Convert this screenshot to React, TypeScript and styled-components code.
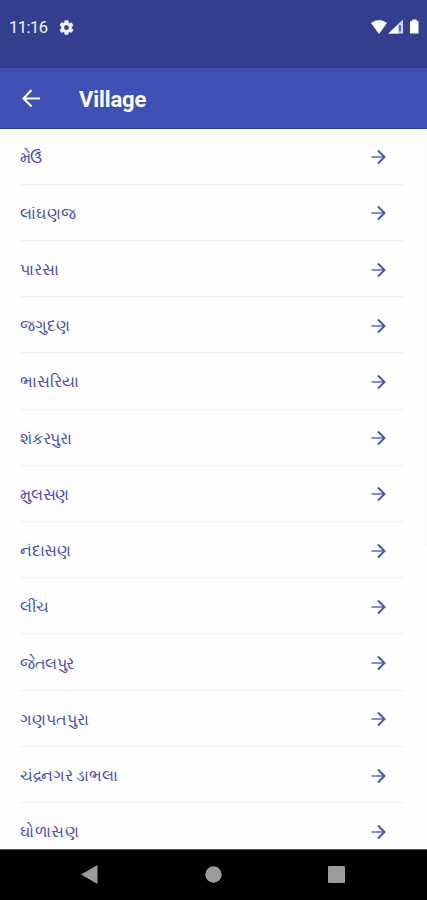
import React from 'react';
import styled, { createGlobalStyle } from 'styled-components';

const Global = createGlobalStyle`
  * { box-sizing: border-box; }
  html, body { margin: 0; padding: 0; overflow: hidden; background: #fff; }
  body { font-family: Roboto, "Noto Sans", sans-serif; }
  svg { display: block; }
`;

const Screen = styled.div`
  width: 427px;
  height: 900px;
  display: flex;
  flex-direction: column;
  overflow: hidden;
  background: #fefefe;
`;

const StatusBar = styled.header`
  flex: 0 0 68px;
  display: flex;
  justify-content: space-between;
  padding: 0 7px 0 9px;
  background: #33408f;
  color: #f1f3ff;
`;

const StatusGroup = styled.div<{ $gap: number }>`
  height: 54px;
  display: flex;
  align-items: center;
  gap: ${p => p.$gap}px;
`;

const Clock = styled.span`
  width: 39px;
  font-size: 16.5px;
  line-height: 20px;
  letter-spacing: -0.5px;
  white-space: nowrap;
  padding-top: 2px;
`;

const AppBar = styled.div`
  flex: 0 0 60.5px;
  display: flex;
  align-items: center;
  gap: 38px;
  padding: 1px 0 0 20px;
  background: #3f51b5;
  border-bottom: 1px solid #2343a8;
  color: #fff;
`;

const Title = styled.h1`
  margin: 3px 0 0;
  font-size: 22px;
  line-height: 26px;
  font-weight: 700;
  letter-spacing: -0.1px;
`;

const Body = styled.main`
  flex: 1;
  min-height: 0;
  display: flex;
  overflow: hidden;
`;

const List = styled.ul`
  flex: 1;
  margin: 0;
  padding: 0 16px 0 20px;
  list-style: none;
`;

const Scrollbar = styled.div`
  flex: 0 0 2px;
  height: 417px;
  background: #f8f8f8;
`;

const Row = styled.li`
  height: 56.23px;
  width: 385px;
  display: flex;
  align-items: center;
  justify-content: space-between;
  padding: 2px 18px 0 0;
  border-bottom: 1.5px solid #f0f0f2;
  color: #4a50b0;
`;

const Name = styled.span<{ $tracking: number }>`
  padding-top: 1px;
  font-size: 16px;
  line-height: 24px;
  letter-spacing: ${p => p.$tracking}px;
  white-space: nowrap;
`;

const NavBar = styled.footer`
  flex: 0 0 51px;
  display: flex;
  align-items: center;
  justify-content: space-between;
  padding: 0 82px 2px 81px;
  background: #000;
  border-top: 1px solid #555;
  color: #9b9b9b;
`;

const villages = [
  { name: 'મેઉઁ', tracking: -0.8 },
  { name: 'લાંઘણજ', tracking: 0.25 },
  { name: 'પારસા', tracking: 0.2 },
  { name: 'જગુદણ', tracking: 0 },
  { name: 'ભાસરિયા', tracking: 0 },
  { name: 'શંકરપુરા', tracking: -0.2 },
  { name: 'મુલસણ', tracking: -0.25 },
  { name: 'નંદાસણ', tracking: -0.4 },
  { name: 'લીંચ', tracking: -0.7 },
  { name: 'જેતલપુર', tracking: -0.4 },
  { name: 'ગણપતપુરા', tracking: -0.1 },
  { name: 'ચંદ્રનગર ડાભલા', tracking: -0.27 },
  { name: 'ઘોળાસણ', tracking: 0.5 },
];

const Gear = () => (
  <svg width="17" height="17" viewBox="0 0 24 24" fill="currentColor" stroke="currentColor" strokeWidth="0.6">
    <path d="M19.14 12.94c.04-.3.06-.61.06-.94s-.02-.64-.07-.94l2.03-1.58a.49.49 0 0 0 .12-.61l-1.92-3.32a.49.49 0 0 0-.59-.22l-2.39.96a7 7 0 0 0-1.62-.94l-.36-2.54A.48.48 0 0 0 13.92 2h-3.84a.48.48 0 0 0-.48.41l-.36 2.54a7.4 7.4 0 0 0-1.62.94l-2.39-.96a.48.48 0 0 0-.59.22L2.73 8.47a.48.48 0 0 0 .12.61l2.03 1.58a6 6 0 0 0 0 2.68l-2.03 1.58a.49.49 0 0 0-.12.61l1.92 3.32c.12.22.37.29.59.22l2.39-.96c.5.38 1.03.7 1.62.94l.36 2.54c.05.24.24.41.48.41h3.84c.24 0 .44-.17.47-.41l.36-2.54a7 7 0 0 0 1.62-.94l2.39.96c.22.08.47 0 .59-.22l1.92-3.32a.48.48 0 0 0-.12-.61zM12 15.6a3.6 3.6 0 1 1 0-7.2 3.6 3.6 0 0 1 0 7.2z" />
  </svg>
);

const Back = () => (
  <svg width="21" height="20" viewBox="0 0 21 20" fill="none" stroke="currentColor" strokeWidth="2.1">
    <path d="M20 10.5H3.5M11.5 2L3.5 10.5l8 8" />
  </svg>
);

const Forward = () => (
  <svg width="16" height="16" viewBox="0 0 16 16" fill="none">
    <path d="M0.5 8H13" stroke="#7b7fc5" strokeWidth="1.8" />
    <path d="M7 1.5L13.5 8L7 14.5" stroke="#4a50b2" strokeWidth="1.9" />
  </svg>
);

const Indicators = () => (
  <svg width="50" height="16" viewBox="0 0 50 16" fill="#fff">
    <path d="M1 4Q9 -2 17 4L9 15z" />
    <path d="M18.5 14.5L33 0.5V14.5z" fill="#cfd5fa" />
    <path d="M18.5 14.5L28 5.5V14.5z" />
    <path d="M30 6v6.5" stroke="#33408f" strokeWidth="1.5" />
    <path d="M42.5 0.5h4v1l2 1V14.5h-8.5V2.5l2.5-1z" />
  </svg>
);

export default function App() {
  return (
    <Screen>
      <Global />
      <StatusBar>
        <StatusGroup $gap={10}><Clock>11:16</Clock><Gear /></StatusGroup>
        <StatusGroup $gap={0}><Indicators /></StatusGroup>
      </StatusBar>
      <AppBar><Back /><Title>Village</Title></AppBar>
      <Body>
        <List>
          {villages.map(({ name, tracking }) => (
            <Row key={name}><Name lang="gu" $tracking={tracking}>{name}</Name><Forward /></Row>
          ))}
        </List>
        <Scrollbar />
      </Body>
      <NavBar>
        <svg width="17" height="19" viewBox="0 0 17 19" fill="currentColor"><path d="M0 9.5L16.5 0v19z" /></svg>
        <svg width="17" height="17" viewBox="0 0 17 17" fill="currentColor"><circle cx="8.5" cy="8.5" r="8.2" /></svg>
        <svg width="17" height="17" viewBox="0 0 17 17" fill="currentColor"><rect width="17" height="17" rx="1" /></svg>
      </NavBar>
    </Screen>
  );
}
